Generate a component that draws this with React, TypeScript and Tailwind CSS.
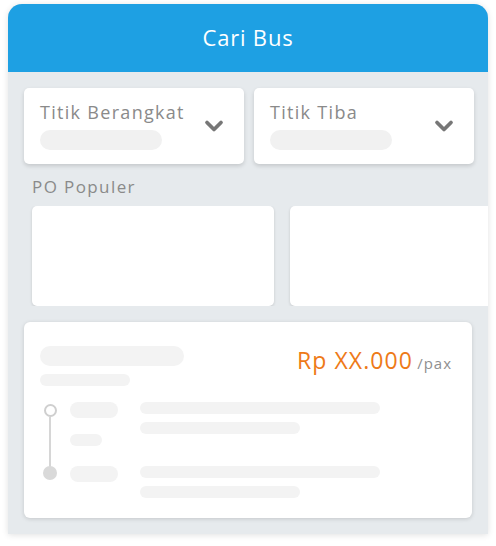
import { ChevronDown } from "lucide-react";

function Picker({ label }: { label: string }) {
    return (
        <div className="flex-1 h-[76px] bg-white rounded-[5px] shadow-[0_2px_4px_rgba(0,0,0,0.15)] flex items-center pl-4 pr-4">
            <div className="flex-1 flex flex-col -mt-[2px]">
                <span className="text-[18px] leading-[22px] text-[#8a8a8a] tracking-[1.3px]">{label}</span>
                <div className="mt-[7px] w-[122px] h-5 rounded-full bg-[#f1f1f1]" />
            </div>
            <ChevronDown className="w-7 h-7 text-[#777] -mt-[1px]" strokeWidth={3.2} />
        </div>
    );
}

function Bar({ className }: { className: string }) {
    return <div className={`rounded-full bg-[#f3f3f3] ${className}`} />;
}

export default function App() {
    return (
        <div className="w-[496px] h-[546px] bg-white pt-1 px-2" style={{ fontFamily: "'Open Sans', 'Noto Sans', sans-serif" }}>
            <div className="h-[530px] rounded-t-[14px] overflow-hidden bg-[#e6eaed] shadow-[0_1px_6px_rgba(0,0,0,0.12)] flex flex-col">
                <div className="h-[68px] bg-[#1ea0e3] flex items-center justify-center pb-[2px]">
                    <span className="text-white text-[22px] tracking-[0.8px]">Cari Bus</span>
                </div>
                <div className="flex gap-[10px] pt-4 pl-4 pr-[14px]">
                    <Picker label="Titik Berangkat" />
                    <Picker label="Titik Tiba" />
                </div>
                <div className="pl-6 pt-[12px] text-[17px] leading-[22px] text-[#8a8a8a] tracking-[1.4px]">PO Populer</div>
                <div className="flex gap-4 pl-6 mt-[8px] overflow-hidden">
                    <div className="shrink-0 w-[242px] h-[100px] bg-white rounded-[5px] shadow-[0_1px_3px_rgba(0,0,0,0.15)]" />
                    <div className="shrink-0 w-[242px] h-[100px] bg-white rounded-[5px] shadow-[0_1px_3px_rgba(0,0,0,0.15)]" />
                </div>
                <div className="mt-4 ml-4 mr-4 h-[196px] bg-white rounded-[6px] shadow-[0_1px_4px_rgba(0,0,0,0.15)] px-4 pt-6">
                    <div className="flex justify-between">
                        <div className="flex flex-col gap-2">
                            <Bar className="w-[144px] h-5" />
                            <Bar className="w-[90px] h-3" />
                        </div>
                        <div className="flex items-baseline gap-1 pr-1">
                            <span className="text-[23px] leading-[28px] text-[#ee7a18] tracking-[1.1px]">Rp XX.000</span>
                            <span className="text-[15px] text-[#8f8f8f] tracking-[1px]">/pax</span>
                        </div>
                    </div>
                    <div className="flex mt-4">
                        <div className="w-5 flex flex-col items-center pt-[2px]">
                            <div className="w-[13px] h-[13px] rounded-full border-2 border-[#cfcfcf] bg-white" />
                            <div className="w-[2px] h-[50px] bg-[#d6d6d6]" />
                            <div className="w-[14px] h-[14px] rounded-full bg-[#d9d9d9] -mt-[1px]" />
                        </div>
                        <div className="ml-[10px] flex flex-col">
                            <Bar className="w-12 h-4" />
                            <Bar className="w-8 h-3 mt-4" />
                            <Bar className="w-12 h-4 mt-5" />
                        </div>
                        <div className="ml-[22px] flex flex-col">
                            <Bar className="w-[240px] h-3" />
                            <Bar className="w-[160px] h-3 mt-2" />
                            <Bar className="w-[240px] h-3 mt-8" />
                            <Bar className="w-[160px] h-3 mt-2" />
                        </div>
                    </div>
                </div>
            </div>
        </div>
    );
}
